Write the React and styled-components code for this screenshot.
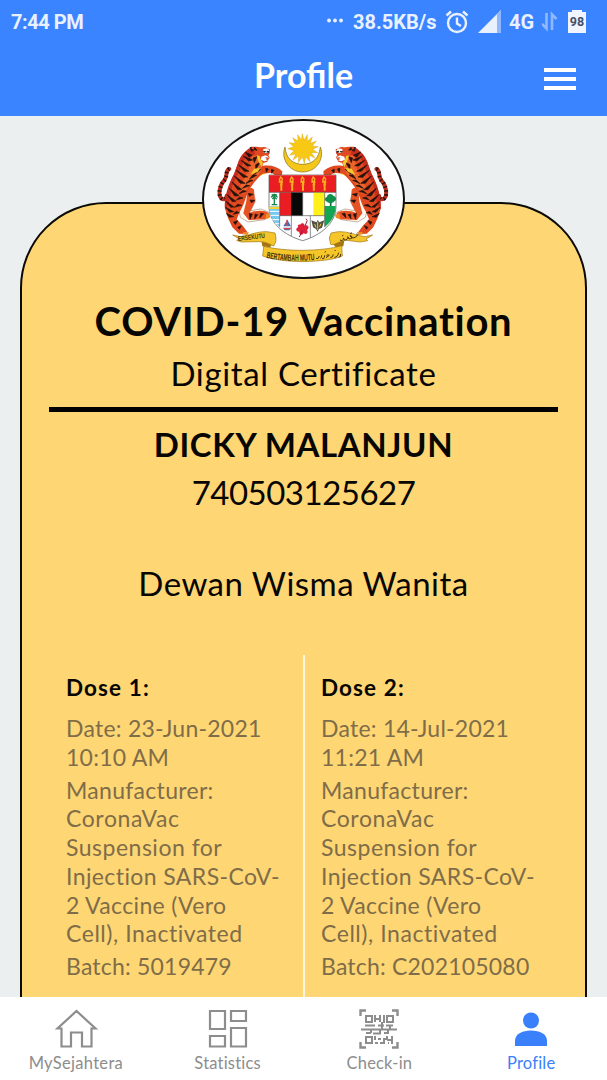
import React from "react";
import styled, { createGlobalStyle } from "styled-components";

const Global = createGlobalStyle`
  * { box-sizing: border-box; }
  body { margin: 0; font-family: Lato, "Liberation Sans", sans-serif; }
`;

const Screen = styled.div`
  width: 607px;
  height: 1080px;
  display: flex;
  flex-direction: column;
  overflow: hidden;
  background: #ebefef;
`;

const Header = styled.header`
  height: 116px;
  flex: none;
  background: #3a84ff;
  color: #fff;
`;

const StatusBar = styled.div`
  height: 44px;
  padding: 0 21px 0 11px;
  display: flex;
  align-items: center;
  justify-content: space-between;
  font: 700 20px/44px Roboto, sans-serif;
  color: #e9f1ff;
`;

const Time = styled.span`
  letter-spacing: -0.45px;
`;

const StatusIcons = styled.div`
  display: flex;
  align-items: center;
  height: 44px;
  svg { display: block; flex: none; }
`;

const StatusText = styled.span`
  width: ${(p) => p.$width}px;
  margin-right: ${(p) => p.$gap}px;
  letter-spacing: ${(p) => p.$spacing || 0}px;
  white-space: nowrap;
`;

const TitleBar = styled.div`
  height: 69px;
  display: grid;
  grid-template-columns: 1fr auto 1fr;
  align-items: center;
  padding: 0 31px;
`;

const Title = styled.h1`
  grid-column: 2;
  margin: 0;
  padding-bottom: 7px;
  font-size: 34px;
  line-height: 40px;
  font-weight: 700;
`;

const MenuButton = styled.button`
  justify-self: end;
  width: 32px;
  height: 22px;
  padding: 0;
  border: 0;
  background: none;
  display: flex;
  flex-direction: column;
  justify-content: space-between;
  span { height: 4px; background: #fff; }
`;

const Content = styled.main`
  flex: 1;
  min-height: 0;
  overflow: hidden;
  padding: 86px 20px 0;
`;

const Card = styled.section`
  width: 567px;
  height: 900px;
  border: 2px solid #0c0a06;
  border-radius: 86px 86px 0 0;
  background: #fed674;
  color: #080602;
  display: flex;
  flex-direction: column;
  align-items: center;
`;

const Badge = styled.div`
  width: 203px;
  height: 160px;
  margin-top: -85px;
  flex: none;
  border: 2px solid #111;
  border-radius: 50%;
  background: #fff;
  overflow: hidden;
  svg { display: block; }
`;

const Line = styled.div`
  margin-top: ${(p) => p.$gap || 0}px;
  height: ${(p) => p.$height}px;
  line-height: ${(p) => p.$height}px;
  font-size: ${(p) => p.$size}px;
  font-weight: ${(p) => (p.$bold ? 700 : 400)};
  letter-spacing: ${(p) => p.$spacing || 0}px;
  white-space: nowrap;
`;

const Rule = styled.hr`
  width: 509px;
  height: 5px;
  margin: 10px 0 0;
  border: 0;
  flex: none;
  background: #000;
`;

const Doses = styled.div`
  width: 100%;
  flex: 1;
  margin-top: 48px;
  display: grid;
  grid-template-columns: 281px 1fr;
`;

const Dose = styled.div`
  padding: 18px 0 0 ${(p) => (p.$divided ? 16 : 44)}px;
  border-left: ${(p) => (p.$divided ? "2px solid #fff6df" : "0")};
`;

const DoseTitle = styled.h2`
  margin: 0 0 11px;
  font-size: 22.5px;
  line-height: 30px;
  font-weight: 700;
  letter-spacing: 1.1px;
`;

const Detail = styled.p`
  margin: 0 0 4.3px;
  font-size: 23px;
  line-height: 28.7px;
  color: #7e6d48;
  white-space: nowrap;
`;

const DetailLine = styled.span`
  display: block;
  letter-spacing: ${(p) => p.$spacing}px;
`;

const Nav = styled.nav`
  height: 83px;
  flex: none;
  background: #fff;
  display: grid;
  grid-template-columns: repeat(4, 1fr);
`;

const Tab = styled.a`
  display: flex;
  flex-direction: column;
  align-items: center;
  padding-top: 10px;
  color: ${(p) => (p.$active ? "#3a80fb" : "#8d8d8d")};
  font-size: 16.5px;
  line-height: 22px;
  letter-spacing: ${(p) => p.$spacing}px;
  svg { display: block; margin-bottom: 1px; }
`;

const stripes = [
  "M138 108l22 10-10 5zM133 120l28 12-12 3zM126 133l30 16-12 1zM119 147l31 19-14 0zM112 163l34 20-14 1z",
  "M106 180l32 22-14 0zM99 198l30 23-13 0zM91 217l29 22-13 1zM84 236l27 20-11 1zM81 256l24 17-10 1z",
  "M80 274l24 13-12 2zM82 292l22 10-13 2zM174 122l-8 18-4-14zM184 139l-14 21 0-14zM185 160l-18 15 6-14z",
  "M173 178l-21 11 10-13zM162 193l-22 10 12-11zM152 209l-22 8 12-10zM142 226l-22 7 12-10zM132 246l-20 6 10-9z",
  "M128 268l-22 6 10-9zM121 290l-18 5 8-9zM200 157l2 12 6-10zM217 160l1 12 7-9zM154 97l10 6-7 3zM167 94l7 9-9-2z",
  "M151 292l2 18 7-15zM168 294l-1 15 9-13zM185 292l-3 14 12-13zM148 232l15 3-12 6zM153 252l15 1-11 7zM104 318l12-4-7 12zM116 334l11-5-6 11z",
];

const Tiger = () => (
  <g>
    <path d="M91 159C78 162 87 180 76 193C62 207 57 235 66 246C72 253 82 250 83 239" fill="none" stroke="#b92d1b" strokeWidth="12" strokeLinecap="round" />
    <path d="M91 159C78 162 87 180 76 193C62 207 57 235 66 246C72 253 82 250 83 239" fill="none" stroke="#24120e" strokeWidth="12" strokeDasharray="4 8" />
    <path d="M139 218l20 0 11 36-15 30 30-5 26 10 4 10-18 12-50 7-23-14-6-25z" fill="#fff8ee" stroke="#8a6a54" strokeWidth="1.5" />
    <path d="M145 222c4-8 16-8 20-1l3 36-16 34c15-8 45-10 57 0l2 9-12 10-50 2-16-20 9-36z" fill="#e65224" />
    <path d="M141 176c20-13 45-18 60-13l-4 12-29 9-8 20-22 26-14 29-13 18z" fill="#f5d93a" />
    <path d="M149 98C157 89 177 94 190 94C200 90 205 99 213 100L212 112L208 118L212 124L205 137L193 141L190 150C212 146 234 150 250 166L249 176L231 180L218 170L191 173C179 182 160 204 148 226C140 244 134 270 123 286L113 310L132 330L145 348L141 354L120 353L100 334L87 306L78 278C76 245 91 203 106 174L119 135C127 118 139 108 149 98z" fill="#e0491f" />
    <path d="M160 118l20 6 12 18-10 30-26 28-24 36-9-24 24-44z" fill="#ed642a" />
    <path d="M149 98l16 3 3 14-14 6 2 10-18-4-15 34-23 48-12 58-10 14c-4-35 9-74 27-108l14-37c8-20 17-28 30-38z" fill="#c52d1d" />
    <path d={stripes.join("")} fill="#26130d" stroke="#26130d" strokeWidth="2" />
    <path d="M193 99l13-2 6 9-4 5-15-1zM187 122l13-4 10 6-11 5 8 4-11 3-11-5z" fill="#fff" />
    <path d="M190 107l8-3 3 3-5 3zM204 104l8 2-3 5-7-2zM198 125l9-1-5 3zM152 94l7-2-3 7z" fill="#222" />
    <path d="M173 118l9 2 2 9 8 11-5 13-10-20zM165 158l19-2-8 12-22 8z" fill="#f4c82d" />
    <path d="M133 348l17 1-5 8-14-2zM202 292l12 5-2 9-13 3z" fill="#ef8c27" />
  </g>
);

const Crest = () => (
  <svg width="199" height="156" viewBox="15 15 597 468">
    <path d="M258 93C244 128 270 168 311 168C351 168 378 130 364 93C360 129 339 145 311 145C283 145 261 129 258 93z" fill="#f4c719" stroke="#806b20" strokeWidth="2" />
    <path d="M310 53l5 20 10-17 0 20 15-13-6 19 18-7-12 15 18 2-17 8 15 10-19 0 11 16-18-8 3 19-13-14-4 20-6-20-12 17 1-20-17 12 8-18-19 4 14-14-19-6 18-6-14-12 19 2-8-17 16 10-1-19 11 15z" fill="#f8c914" stroke="#c89c12" strokeWidth="1" />
    <Tiger />
    <g transform="translate(623 0) scale(-1 1)"><Tiger /></g>
    <path d="M210 177H411V270C411 322 365 358 311 374C256 358 210 322 210 270z" fill="#fff" stroke="#484848" strokeWidth="2" />
    <path d="M210 178H411V229H210z" fill="#e91d22" />
    <path d="M242 229H276V299H242z" fill="#e91d22" />
    <path d="M276 229H311V299H276z" fill="#080808" />
    <path d="M343 229H377V299H343z" fill="#fff01c" />
    <path d="M377 270H410C411 294 397 318 377 333z" fill="#15a653" />
    <path d="M211 271H242V333C221 316 211 297 211 271z" fill="#75c8ef" />
    <path d="M211 272h31v7h-31z" fill="#fbd42b" />
    <path d="M212 286h30M214 298h28M220 311h22M229 323h13" stroke="#fff" strokeWidth="3" />
    <path d="M242 229V332M277 299V360M311 229V299M334 299V365M377 229V333M242 299H377M210 229H411" fill="none" stroke="#555" strokeWidth="2" />
    <path d="M226 264V243M218 266h17M216 244q10-11 20 0M218 238q8-5 16 0M220 249l6-6 7 7" fill="none" stroke="#16874b" strokeWidth="4" />
    <path d="M395 270V251" stroke="#116d35" strokeWidth="5" />
    <path d="M384 257c-11-4-5-15 0-14 0-11 17-12 19-3 11 1 10 14 3 16-5 7-15 7-22 1z" fill="#10914b" />
    {[0, 1, 2, 3, 4].map((i) => (
      <path key={i} transform={`translate(${i * 32.5} 0)`} d="M246 224V198L241 192 245 183 250 189 248 197 248 224M239 198h13M243 208l8-5" fill="none" stroke="#f8ae1d" strokeWidth="4" />
    ))}
    <path d="M253 331l12-20 11 20zM252 335h25l-6 8h-14z" fill="#486bb1" />
    <path d="M264 311v19M255 338h20" stroke="#d64a4e" strokeWidth="4" />
    <path d="M303 326c8-9 15-2 13 3 12-5 17 7 8 13 7 8-4 16-10 9-4 10-15 4-13-4-12 1-11-13-3-13-4-6 0-9 5-8z" fill="#df203b" />
    <path d="M310 344l-9 19M318 330l6-15M321 308l4 6" stroke="#8b2335" strokeWidth="3" />
    <path d="M337 313l15 6 4-7 5 7 15-6-7 22-9 4-4 8-5-8-9-5z" fill="#535146" />
    <path d="M356 317v24M347 324l4 10M366 323l-4 9" stroke="#edc83b" strokeWidth="3" />
    <path d="M187 373l37 7-11 14-23-3zM436 373l-37 7 11 14 23-3z" fill="#a47610" />
    <path d="M101 357L124 362C148 359 173 346 204 347L228 351 231 366 230 378 224 390C212 384 197 376 177 377L127 378 113 373 121 369z" fill="#f6c52a" stroke="#9a7414" strokeWidth="2" />
    <path d="M521 357L498 362C474 359 449 346 418 347L396 351 391 366 395 385C407 390 414 377 441 373L484 378 506 374 501 369z" fill="#f6c52a" stroke="#9a7414" strokeWidth="2" />
    <path d="M194 391C231 399 264 403 312 403C360 402 397 398 428 389L430 420C402 432 364 435 312 437C264 436 226 432 191 420z" fill="#f6c52a" stroke="#9a7414" strokeWidth="2" />
    <text x="118" y="375" transform="rotate(-7 118 375)" textLength="81" lengthAdjust="spacingAndGlyphs" fontFamily="Liberation Sans" fontWeight="700" fontSize="20" fill="#40310b">ERSEKUTU</text>
    <path id="motto" d="M202 426Q274 440 350 431" fill="none" />
    <text fontFamily="Liberation Sans" fontWeight="700" fontSize="27" fill="#40310b"><textPath href="#motto" textLength="146" lengthAdjust="spacingAndGlyphs">BERTAMBAH MUTU</textPath></text>
    <path d="M351 427q7 5 10-7m3 7q5-2 4-9m1 9q7 5 8-9m4 7l10-7q-9-5-7 3m10 4q7 0 9-10m3 9q10 0 13-14m0 14q7 0 6-10M377 409l4-3M407 402l3 3M423 372q9 5 11-6 1 10 11 3 4-4 1-7 2 10 12 5 3-9-5-8 4 10 15 5 7-3 9-9M429 360l4-2M453 354l6-4M472 354l3 2" fill="none" stroke="#493710" strokeWidth="3" />
  </svg>
);

const AlarmIcon = () => (
  <svg width="24" height="24" viewBox="0 0 24 24" fill="none" stroke="#e9f1ff" strokeWidth="2.4">
    <circle cx="12" cy="13" r="9" />
    <path d="M12 7.5V13.5L16 16M1.5 5.5L6 1.5M22.5 5.5L18 1.5" />
  </svg>
);

const HomeIcon = () => (
  <svg width="44" height="44" viewBox="0 0 44 44" fill="none" stroke="currentColor" strokeWidth="2.2">
    <path d="M7.5 21.5H3.5L22.5 4L41.5 21.5H37.5V39.5H28V25.5H17V39.5H7.5z" />
  </svg>
);

const StatsIcon = () => (
  <svg width="44" height="44" viewBox="0 0 44 44" fill="none" stroke="currentColor" strokeWidth="2.2">
    <path d="M4 4h15v18H4zM25 4h15v10H25zM4 29h15v10.5H4zM25 21h15v18.5H25z" />
  </svg>
);

const ScanIcon = () => (
  <svg width="44" height="44" viewBox="0 0 44 44" fill="none" stroke="currentColor" strokeWidth="2">
    <path d="M3.5 9V3.5H9M35 3.5H40.5V9M40.5 35V40.5H35M9 40.5H3.5V35" strokeWidth="2.4" />
    <path d="M9 9h6v6H9zM30 9h6v6h-6zM9 30h6v6H9zM18 8v7M18 12h5M23 8v7M27 8v8M4 22.5h36M8 18.5h10M21 18.5h6M25 15v7M29 18.5h7M33 18.5v4M9 26h5M14 26v-3M16 26.5h8M23 23v4M27 26h4M31 23v4M18 29v4M18 36h3M21 32h3M23 36h4v-5M26 32h4M30 29v4M30 33h6M35 29v8M31 36h1" />
  </svg>
);

const ProfileIcon = () => (
  <svg width="44" height="44" viewBox="0 0 44 44" fill="currentColor">
    <circle cx="22" cy="13.5" r="8" />
    <path d="M6 39V34C6 27 13 23.5 22 23.5S38 27 38 34V39z" />
  </svg>
);

const doses = [
  { title: "Dose 1:", date: "Date: 23-Jun-2021", time: "10:10 AM", batch: "Batch: 5019479" },
  { title: "Dose 2:", date: "Date: 14-Jul-2021", time: "11:21 AM", batch: "Batch: C202105080" },
];

const vaccine = [
  ["Manufacturer:", 0.3],
  ["CoronaVac", 0.6],
  ["Suspension for", 0.5],
  ["Injection SARS-CoV-", 0.4],
  ["2 Vaccine (Vero", 0.35],
  ["Cell), Inactivated", 0.55],
];

export default function App() {
  return (
    <Screen>
      <Global />
      <Header>
        <StatusBar>
          <Time>7:44 PM</Time>
          <StatusIcons>
            <svg width="26" height="24" viewBox="0 0 26 24" fill="#e9f1ff"><circle cx="2" cy="10.5" r="1.9" /><circle cx="8" cy="10.5" r="1.9" /><circle cx="14" cy="10.5" r="1.9" /></svg>
            <StatusText $width={86} $gap={6}>38.5KB/s</StatusText>
            <AlarmIcon />
            <svg width="40" height="24" viewBox="0 0 40 24"><path d="M9 23L32 0V23z" fill="#e9f1ff" /><path d="M28 4L32 0V23H28z" fill="#8fb8ff" /></svg>
            <StatusText $width={27} $gap={6}>4G</StatusText>
            <svg width="18" height="22" viewBox="0 0 18 22" fill="none" stroke="#8fb8ff" strokeWidth="2.6"><path d="M0 13L4.5 17.5V2M14.5 8L10 3.5V19" /></svg>
            <svg width="26" height="24" viewBox="0 0 26 24">
              <path d="M8 2h4V0h10v2h4v21H8z" fill="#f0f5ff" />
              <text x="17" y="16" textAnchor="middle" fontFamily="Roboto" fontWeight="700" fontSize="12.5" fill="#455068">98</text>
            </svg>
          </StatusIcons>
        </StatusBar>
        <TitleBar>
          <Title>Profile</Title>
          <MenuButton aria-label="Menu"><span /><span /><span /></MenuButton>
        </TitleBar>
      </Header>
      <Content>
        <Card>
          <Badge><Crest /></Badge>
          <Line $gap={18} $height={48} $size={40} $bold $spacing={0.72}>COVID-19 Vaccination</Line>
          <Line $gap={4} $height={48} $size={33} $spacing={0.65}>Digital Certificate</Line>
          <Rule />
          <Line $gap={8} $height={48} $size={33} $bold $spacing={0.6}>DICKY MALANJUN</Line>
          <Line $height={48} $size={33} $spacing={-0.5}>740503125627</Line>
          <Line $gap={43} $height={48} $size={33} $spacing={0.48}>Dewan Wisma Wanita</Line>
          <Doses>
            {doses.map((d, i) => (
              <Dose key={d.title} $divided={i > 0}>
                <DoseTitle>{d.title}</DoseTitle>
                <Detail>
                  <DetailLine $spacing={0.25}>{d.date}</DetailLine>
                  <DetailLine $spacing={0.25}>{d.time}</DetailLine>
                </Detail>
                <Detail>
                  {vaccine.map(([text, spacing]) => (
                    <DetailLine key={text} $spacing={spacing}>{text}</DetailLine>
                  ))}
                </Detail>
                <Detail><DetailLine $spacing={0.2}>{d.batch}</DetailLine></Detail>
              </Dose>
            ))}
          </Doses>
        </Card>
      </Content>
      <Nav>
        <Tab $spacing={0.3}><HomeIcon />MySejahtera</Tab>
        <Tab $spacing={0.2}><StatsIcon />Statistics</Tab>
        <Tab $spacing={0.2}><ScanIcon />Check-in</Tab>
        <Tab $spacing={0.2} $active><ProfileIcon />Profile</Tab>
      </Nav>
    </Screen>
  );
}
